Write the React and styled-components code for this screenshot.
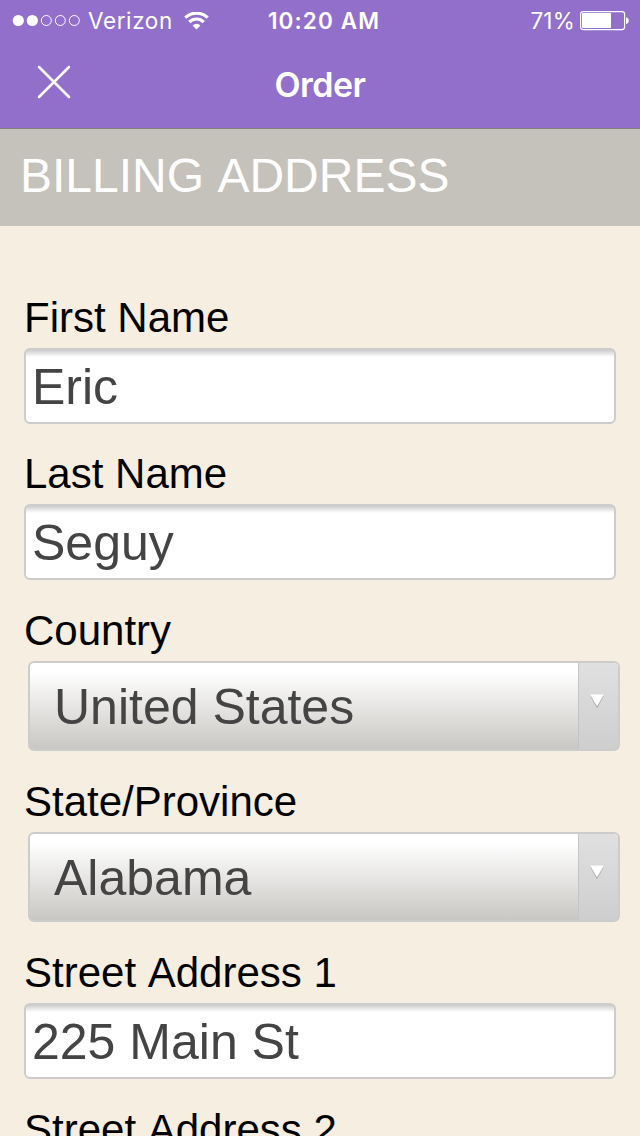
import React from 'react';
import styled, { createGlobalStyle } from 'styled-components';

const fields = [
  { label: 'First Name', value: 'Eric', gap: 25 },
  { label: 'Last Name', value: 'Seguy' },
  { label: 'Country', value: 'United States', type: 'select' },
  { label: 'State/Province', value: 'Alabama', type: 'select' },
  { label: 'Street Address 1', value: '225 Main St' },
  { label: 'Street Address 2', value: '' },
];

function Signal() {
  return (
    <svg width="69" height="13" viewBox="0 0 69 13">
      {[0, 1, 2, 3, 4].map((i) => (
        <circle
          key={i}
          cx={6.3 + i * 14}
          cy="6.5"
          r={i < 2 ? 5.6 : 5}
          fill={i < 2 ? '#fff' : 'none'}
          stroke={i < 2 ? 'none' : '#fff'}
        />
      ))}
    </svg>
  );
}

function Wifi() {
  return (
    <svg width="25" height="18" viewBox="0 0 25 18" fill="none" stroke="#fff" strokeWidth="3.2">
      <path d="M1.3 5.7a16 16 0 0 1 22.4 0" />
      <path d="M5.2 10a10.4 10.4 0 0 1 14.6 0" />
      <path d="M12.5 17.4l-3.9-4a5.6 5.6 0 0 1 7.8 0z" fill="#fff" stroke="none" />
    </svg>
  );
}

function Battery() {
  return (
    <svg width="50" height="20" viewBox="0 0 50 20">
      <rect x="0.6" y="0.6" width="44" height="18" rx="2.6" fill="none" stroke="#fff" strokeWidth="1.1" />
      <rect x="2" y="2" width="29" height="15" rx="0.8" fill="#fff" />
      <path d="M46 6.2c3.7 0.8 3.7 6 0 6.8z" fill="#fff" />
    </svg>
  );
}

function App() {
  return (
    <Screen>
      <GlobalStyle />
      <Header>
        <StatusBar>
          <Carrier>
            <Signal />
            <CarrierName>Verizon</CarrierName>
            <Wifi />
          </Carrier>
          <Clock>10:20 AM</Clock>
          <Power>
            <Percent>71%</Percent>
            <Battery />
          </Power>
        </StatusBar>
        <NavBar>
          <CloseButton aria-label="Close">
            <svg width="34" height="34" viewBox="0 0 34 34" stroke="#fff" strokeWidth="2.5" strokeLinecap="round">
              <path d="M2 2l30 30M32 2L2 32" />
            </svg>
          </CloseButton>
          <Title>Order</Title>
        </NavBar>
      </Header>
      <Banner>BILLING ADDRESS</Banner>
      <Form>
        {fields.map((field) => (
          <FieldRow key={field.label} $gap={field.gap}>
            <Label>{field.label}</Label>
            {field.type === 'select' ? (
              <Select type="button">
                <SelectValue>{field.value}</SelectValue>
                <SelectArrow>
                  <svg width="16" height="15" viewBox="0 0 16 15">
                    <path d="M1 1.5h14L8 14.3z" fill="#aaa" />
                    <path d="M1 0.5h14L8 12.3z" fill="#fff" />
                  </svg>
                </SelectArrow>
              </Select>
            ) : (
              <Input type="text" aria-label={field.label} defaultValue={field.value} />
            )}
          </FieldRow>
        ))}
      </Form>
    </Screen>
  );
}

export default App;


const GlobalStyle = createGlobalStyle`
    * {
        box-sizing: border-box;
    }
    body {
        margin: 0;
        background: #f5eee1;
        overflow: hidden;
    }
    svg {
        display: block;
        flex-shrink: 0;
    }
`;

const Screen = styled.div`
    width: 640px;
    height: 1136px;
    overflow: hidden;
    background: #f5eee1;
    font-family: "Liberation Sans", Arial, sans-serif;
    font-kerning: none;
`;

const Header = styled.header`
    height: 129px;
    background: #926fcb;
    border-bottom: 1px solid #85817f;
    color: #fff;
    font-family: Inter, sans-serif;
    font-kerning: normal;
`;

const StatusBar = styled.div`
    display: grid;
    grid-template-columns: 1fr auto 1fr;
    align-items: center;
    height: 41px;
    padding: 0 10px 0 12px;
    font-size: 22.5px;
    line-height: 41px;
`;

const Carrier = styled.div`
    display: flex;
    align-items: center;
`;

const CarrierName = styled.span`
    width: 88px;
    margin: 0 8px 0 7px;
    letter-spacing: 0.6px;
`;

const Clock = styled.div`
    padding-left: 6px;
    font-weight: 600;
    letter-spacing: 1.1px;
`;

const Power = styled.div`
    display: flex;
    justify-content: flex-end;
    align-items: center;
`;

const Percent = styled.span`
    margin-right: 5px;
    letter-spacing: 0.2px;
`;

const NavBar = styled.nav`
    display: grid;
    grid-template-columns: 1fr auto 1fr;
    align-items: center;
    height: 87px;
    padding: 0 37px;
`;

const CloseButton = styled.button`
    justify-self: start;
    padding: 0;
    margin-bottom: 5px;
    border: none;
    background: transparent;
`;

const Title = styled.h1`
    margin: 0;
    font-size: 34px;
    font-weight: 600;
    line-height: 44px;
    letter-spacing: -0.5px;
`;

const Banner = styled.h2`
    height: 97px;
    margin: 0;
    padding: 0 20px;
    background: #c5c1bb;
    color: #fff;
    font-size: 48px;
    font-weight: normal;
    line-height: 93px;
`;

const Form = styled.form`
    padding: 68px 20px 0 24px;
`;

const FieldRow = styled.div`
    display: flex;
    flex-direction: column;
    margin-bottom: ${(props) => props.$gap || 26}px;
`;

const Label = styled.label`
    margin-bottom: 6px;
    color: #000;
    font-size: 42px;
    line-height: 48px;
`;

const Input = styled.input`
    width: 592px;
    height: 76px;
    margin-bottom: 1px;
    padding: 2px 6px 0;
    border: 2px solid #ccc;
    border-radius: 6px;
    outline: none;
    background: linear-gradient(#ccc, #fff 7px);
    color: #444;
    font-family: inherit;
    font-size: 50px;
    font-kerning: none;
`;

const Select = styled.button`
    display: flex;
    width: 592px;
    height: 90px;
    margin: 0 0 1px 4px;
    padding: 0;
    border: 2px solid #ccc;
    border-radius: 6px;
    background: linear-gradient(#fff 10%, #c9c7c3);
    color: #444;
    font-family: inherit;
    font-size: 50px;
    text-align: left;
    overflow: hidden;
`;

const SelectValue = styled.span`
    flex: 1;
    padding-left: 24px;
    line-height: 88px;
`;

const SelectArrow = styled.span`
    display: flex;
    justify-content: center;
    width: 40px;
    height: 86px;
    padding: 31px 4px 0 0;
    border-left: 1px solid #c4c4c4;
    background: linear-gradient(#e0e0e0, #cecece);
`;
